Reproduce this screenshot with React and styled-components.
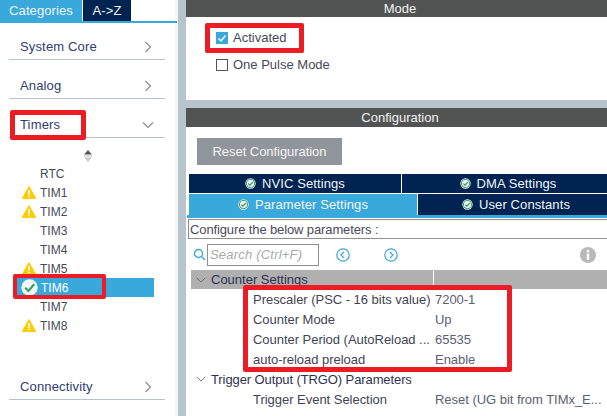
import styled, { createGlobalStyle } from "styled-components";

const GlobalStyle = createGlobalStyle`
  html, body {
    margin: 0;
    padding: 0;
    width: 607px;
    height: 416px;
    overflow: hidden;
    background: white;
    font-family: "Liberation Sans", Arial, sans-serif;
  }
`;

const Page = styled.div`
  position: relative;
  display: flex;
  width: 607px;
  height: 416px;
  overflow: hidden;
  font-size: 13px;
`;

const Sidebar = styled.div`
  width: 175px;
  flex-shrink: 0;
  background: white;
  border-right: 3px solid #f3f5f6;
`;

const Splitter = styled.div`
  width: 8px;
  flex-shrink: 0;
  background: #b8c4cb;
`;

const TabBar = styled.div`
  display: flex;
  height: 21px;
  width: 177px;
  border-bottom: 2px solid #39a9dc;
  margin-right: -2px;
`;

const SideTab = styled.div`
  display: flex;
  align-items: center;
  justify-content: center;
  width: ${(p) => p.$w}px;
  margin-right: 1px;
  color: #f0f4f8;
  letter-spacing: 0.1px;
  background: ${(p) => (p.$active ? "#39a9dc" : "#002451")};
`;

const CategoryList = styled.div`
  padding: 11px 10px 0 9px;
`;

const Category = styled.div`
  display: flex;
  align-items: center;
  justify-content: space-between;
  box-sizing: border-box;
  height: 26px;
  margin-bottom: ${(p) => p.$mb || 13}px;
  padding: 0 11px 0 11px;
  border-bottom: 1px solid #b8c4cb;
  color: #2f3d70;
  font-size: 13px;
  letter-spacing: 0.15px;
`;

const Tree = styled.div`
  display: flex;
  flex-direction: column;
  margin: 0 0 0 8px;
  height: 226px;
`;

const SortIcon = styled.div`
  display: flex;
  justify-content: center;
  width: 141px;
  padding-top: 2px;
  height: 14px;
`;

const TreeRow = styled.div`
  display: flex;
  align-items: center;
  box-sizing: border-box;
  width: 137px;
  height: 19px;
  padding-left: 3px;
  font-size: 12px;
  color: ${(p) => (p.$selected ? "white" : "#454a58")};
  background: ${(p) => (p.$selected ? "#39a9dc" : "transparent")};
`;

const IconSlot = styled.div`
  display: flex;
  align-items: center;
  justify-content: center;
  width: 18px;
  height: 19px;
  margin-right: ${(p) => p.$mr ?? 0}px;
`;

const Main = styled.div`
  flex: 1;
  display: flex;
  flex-direction: column;
  min-width: 0;
`;

const SectionHeader = styled.div`
  display: flex;
  align-items: center;
  justify-content: center;
  height: ${(p) => p.$h}px;
  padding-left: 7px;
  background: #525453;
  color: #f2f2f2;
  font-size: 13px;
`;

const ModeBody = styled.div`
  display: flex;
  flex-direction: column;
  gap: 7px;
  height: 83px;
  box-sizing: border-box;
  padding: 10px 0 0 30px;
`;

const CheckRow = styled.div`
  display: flex;
  align-items: center;
  gap: 5px;
  height: 20px;
  color: #454a58;
`;

const Box = styled.div`
  display: flex;
  align-items: center;
  justify-content: center;
  box-sizing: border-box;
  width: 12px;
  height: 12px;
  margin-top: 2px;
  background: ${(p) => (p.$checked ? "#39a9dc" : "white")};
  border: 1px solid ${(p) => (p.$checked ? "#39a9dc" : "#555")};
`;

const Band = styled.div`
  height: 8px;
  flex-shrink: 0;
  background: #b8c4cb;
`;

const ConfigBody = styled.div`
  flex: 1;
  display: flex;
  flex-direction: column;
  min-height: 0;
`;

const ResetButton = styled.div`
  display: flex;
  align-items: center;
  justify-content: center;
  width: 145px;
  height: 27px;
  margin: 11px 0 9px 11px;
  background: #90959c;
  color: #f4f4f4;
  font-size: 13px;
  letter-spacing: -0.05px;
`;

const TabRow = styled.div`
  display: grid;
  grid-template-columns: ${(p) => p.$cols};
  column-gap: 1px;
  height: ${(p) => p.$h}px;
  margin: 0 0 1px 3px;
`;

const ConfigTab = styled.div`
  display: flex;
  align-items: center;
  justify-content: center;
  gap: 6px;
  padding-left: ${(p) => (p.$clipped ? 7 : 0)}px;
  color: #f2f5f8;
  font-size: 13px;
  letter-spacing: 0.1px;
  background: ${(p) => (p.$active ? "#39a9dc" : "#002451")};
`;

const TabRule = styled.div`
  height: 3px;
  margin: -1px 0 0 1px;
  background: #39a9dc;
`;

const ConfigureLine = styled.div`
  display: flex;
  align-items: center;
  box-sizing: border-box;
  height: 20px;
  margin: 1px 0 0 2px;
  padding-left: 1px;
  border: 1px solid #8f8f8f;
  border-right: none;
  color: #4b4a5a;
  letter-spacing: -0.12px;
`;

const SearchRow = styled.div`
  display: flex;
  align-items: center;
  height: 31px;
  padding-left: 7px;
`;

const SearchInput = styled.div`
  display: flex;
  align-items: center;
  box-sizing: border-box;
  width: 112px;
  height: 22px;
  margin-left: 1px;
  padding-left: 2px;
  border: 1px solid #8f8f8f;
  color: #a9a9a9;
  font-style: italic;
  letter-spacing: 0.2px;
`;

const NavButton = styled.div`
  display: flex;
  margin-left: ${(p) => p.$ml}px;
`;

const GroupHeader = styled.div`
  display: grid;
  grid-template-columns: 242px 1fr;
  column-gap: 1px;
  height: 19px;
  margin-left: 5px;
`;

const GroupCell = styled.div`
  display: flex;
  align-items: center;
  height: 19px;
  padding-left: 5px;
  background: #b0b0b0;
  color: #2e3352;
  gap: 5px;
`;

const ParamGrid = styled.div`
  padding-top: 0;
`;

const ParamRow = styled.div`
  display: grid;
  grid-template-columns: 182px 1fr;
  align-items: center;
  height: 20px;
  padding-left: 67px;
  color: #3f4452;
  white-space: nowrap;
  letter-spacing: -0.03px;
`;

const ParamValue = styled.span`
  color: #5a6070;
`;

const GroupRow = styled.div`
  display: flex;
  align-items: center;
  gap: 5px;
  height: 20px;
  padding-left: 10px;
  color: #2e3352;
  letter-spacing: -0.1px;
`;

const Highlight = styled.div`
  position: absolute;
  box-sizing: border-box;
  left: ${(p) => p.$x}px;
  top: ${(p) => p.$y}px;
  width: ${(p) => p.$w}px;
  height: ${(p) => p.$h}px;
  border: ${(p) => p.$b || 5}px solid #ed1c24;
  border-radius: 2px;
  pointer-events: none;
`;

const Chevron = ({ dir = "right", color = "#8a8a8a", size = 12 }) => (
  <svg width={size} height={size} viewBox="0 0 12 12" fill="none" stroke={color} strokeWidth="1.1">
    {dir === "right" ? <path d="M3.5 1 L8.5 6 L3.5 11" /> : <path d="M1 3.5 L6 8.5 L11 3.5" />}
  </svg>
);

const Warning = () => (
  <svg width="14" height="13" viewBox="0 0 14 13">
    <path d="M7 0.5 L13.8 12.6 L0.2 12.6 Z" fill="#ffcc00" stroke="#ffcc00" strokeLinejoin="round" />
    <rect x="6.2" y="4" width="1.6" height="5" fill="white" />
    <rect x="6.2" y="9.8" width="1.6" height="1.6" fill="white" />
  </svg>
);

const CheckCircle = ({ size = 11, ring = "#3f9f6f" }) => (
  <svg width={size} height={size} viewBox="0 0 12 12">
    <circle cx="6" cy="6" r="5.6" fill="white" />
    <circle cx="6" cy="6" r="5" fill={ring} />
    <circle cx="6" cy="6" r="3.8" fill="white" />
    <path d="M3.6 6.1 L5.4 7.9 L8.6 4.3" fill="none" stroke={ring} strokeWidth="1.5" />
  </svg>
);

const BigCheck = () => (
  <svg width="17" height="17" viewBox="0 0 17 17">
    <circle cx="8.5" cy="8.5" r="8.2" fill="#f4f8f6" />
    <path d="M4.2 8.8 L7.4 12 L13.2 5.2" fill="none" stroke="#35a06c" strokeWidth="2.2" />
  </svg>
);

const Sort = () => (
  <svg width="8" height="12" viewBox="0 0 8 12">
    <path d="M4 0 L8 4.5 L0 4.5 Z" fill="#555" />
    <rect x="0" y="5.5" width="8" height="1" fill="#bbb" />
    <path d="M4 12 L8 7.5 L0 7.5 Z" fill="#c8c8c8" />
  </svg>
);

const Tick = () => (
  <svg width="10" height="10" viewBox="0 0 10 10">
    <path d="M1.5 5.5 L4 8 L8.5 2.5" fill="none" stroke="white" strokeWidth="1.5" />
  </svg>
);

const SearchIcon = () => (
  <svg width="13" height="13" viewBox="0 0 13 13" fill="none" stroke="#39a9dc" strokeWidth="1.4">
    <circle cx="5.5" cy="5.5" r="4" />
    <path d="M8.5 8.5 L12 12" />
  </svg>
);

const NavCircle = ({ flip }) => (
  <svg width="14" height="14" viewBox="0 0 14 14" fill="none" stroke="#39a9dc" strokeWidth="1.2">
    <circle cx="7" cy="7" r="6.2" />
    <path d={flip ? "M6 4 L9 7 L6 10" : "M8 4 L5 7 L8 10"} />
  </svg>
);

const InfoIcon = () => (
  <svg width="16" height="16" viewBox="0 0 16 16">
    <circle cx="8" cy="8" r="8" fill="#b9b9b9" />
    <rect x="6.8" y="3" width="2.4" height="2.4" fill="white" />
    <rect x="6.8" y="6.6" width="2.4" height="6.4" fill="white" />
  </svg>
);

const timers = [
  { name: "RTC" },
  { name: "TIM1", warn: true },
  { name: "TIM2", warn: true },
  { name: "TIM3" },
  { name: "TIM4" },
  { name: "TIM5", warn: true },
  { name: "TIM6", selected: true },
  { name: "TIM7" },
  { name: "TIM8", warn: true },
];

const counterParams = [
  ["Prescaler (PSC - 16 bits value)", "7200-1"],
  ["Counter Mode", "Up"],
  ["Counter Period (AutoReload ...", "65535"],
  ["auto-reload preload", "Enable"],
];

export default function App() {
  return (
    <Page>
      <GlobalStyle />
      <Sidebar>
        <TabBar>
          <SideTab $active $w={82}>Categories</SideTab>
          <SideTab $w={48}>A-&gt;Z</SideTab>
        </TabBar>
        <CategoryList>
          <Category>System Core<Chevron /></Category>
          <Category>Analog<Chevron /></Category>
          <Category $mb={10}>Timers<Chevron dir="down" /></Category>
          <Tree>
            <SortIcon><Sort /></SortIcon>
            {timers.map((t) => (
              <TreeRow key={t.name} $selected={t.selected}>
                <IconSlot $mr={t.selected ? 3 : 2}>
                  {t.warn && <Warning />}
                  {t.selected && <BigCheck />}
                </IconSlot>
                {t.name}
              </TreeRow>
            ))}
          </Tree>
          <Category>Connectivity<Chevron /></Category>
        </CategoryList>
      </Sidebar>
      <Splitter />
      <Main>
        <SectionHeader $h={17}>Mode</SectionHeader>
        <ModeBody>
          <CheckRow><Box $checked><Tick /></Box>Activated</CheckRow>
          <CheckRow><Box />One Pulse Mode</CheckRow>
        </ModeBody>
        <Band />
        <SectionHeader $h={19}>Configuration</SectionHeader>
        <ConfigBody>
          <ResetButton>Reset Configuration</ResetButton>
          <TabRow $cols="212px 1fr" $h={19}>
            <ConfigTab><CheckCircle />NVIC Settings</ConfigTab>
            <ConfigTab $clipped><CheckCircle />DMA Settings</ConfigTab>
          </TabRow>
          <TabRow $cols="228px 1fr" $h={21}>
            <ConfigTab $active><CheckCircle />Parameter Settings</ConfigTab>
            <ConfigTab $clipped><CheckCircle />User Constants</ConfigTab>
          </TabRow>
          <TabRule />
          <ConfigureLine>Configure the below parameters :</ConfigureLine>
          <SearchRow>
            <SearchIcon />
            <SearchInput>Search (Ctrl+F)</SearchInput>
            <NavButton $ml={17}><NavCircle /></NavButton>
            <NavButton $ml={34}><NavCircle flip /></NavButton>
            <NavButton $ml={182}><InfoIcon /></NavButton>
          </SearchRow>
          <GroupHeader>
            <GroupCell><Chevron dir="down" size={10} color="#666" />Counter Settings</GroupCell>
            <GroupCell />
          </GroupHeader>
          <ParamGrid>
            {counterParams.map(([label, value]) => (
              <ParamRow key={label}>{label}<ParamValue>{value}</ParamValue></ParamRow>
            ))}
            <GroupRow><Chevron dir="down" size={10} color="#666" />Trigger Output (TRGO) Parameters</GroupRow>
            <ParamRow>Trigger Event Selection<ParamValue>Reset (UG bit from TIMx_E...</ParamValue></ParamRow>
          </ParamGrid>
        </ConfigBody>
      </Main>
      <Highlight $x={10} $y={110} $w={76} $h={30} />
      <Highlight $x={13} $y={274} $w={93} $h={25} $b={4} />
      <Highlight $x={205} $y={23} $w={99} $h={30} />
      <Highlight $x={243} $y={285} $w={269} $h={87} />
    </Page>
  );
}
